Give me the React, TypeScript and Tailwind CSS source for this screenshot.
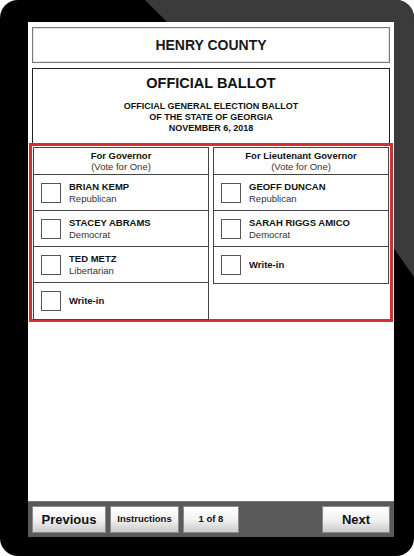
import React from 'react';

type Candidate = { name: string; party?: string };

const governor: Candidate[] = [
  { name: 'BRIAN KEMP', party: 'Republican' },
  { name: 'STACEY ABRAMS', party: 'Democrat' },
  { name: 'TED METZ', party: 'Libertarian' },
  { name: 'Write-in' },
];

const lieutenant: Candidate[] = [
  { name: 'GEOFF DUNCAN', party: 'Republican' },
  { name: 'SARAH RIGGS AMICO', party: 'Democrat' },
  { name: 'Write-in' },
];

const Contest: React.FC<{ title: string; items: Candidate[] }> = ({ title, items }) => (
  <div className="w-[176px] self-start border border-[#444]">
    <div className="h-[27px] flex flex-col items-center justify-center border-b border-[#444] leading-[11px] text-[9.5px] text-[#111]">
      <span className="font-bold">{title}</span>
      <span className="text-[#333]">(Vote for One)</span>
    </div>
    {items.map((c, i) => (
      <div
        key={c.name}
        className={`h-[36px] flex items-center pl-[7px] gap-[8px] ${i < items.length - 1 ? 'border-b border-[#444]' : ''}`}
      >
        <div className="w-[20px] h-[20px] border-[1.5px] border-[#555] bg-white shrink-0" />
        <div className="flex flex-col leading-[12px] text-[9.5px]">
          <span className="font-bold text-[#111]">{c.name}</span>
          {c.party && <span className="text-[#333]">{c.party}</span>}
        </div>
      </div>
    ))}
  </div>
);

const NavButton: React.FC<{ label: string; className: string }> = ({ label, className }) => (
  <button
    className={`h-[27px] flex items-center justify-center font-bold text-[#111] bg-linear-to-b from-white via-[#f2f2f2] to-[#cbcbcb] border border-[#8a8a8a] ${className}`}
  >
    {label}
  </button>
);

export default function App() {
  return (
    <div className="w-[414px] h-[556px] bg-white font-['Liberation_Sans',Arial,sans-serif]">
      <div className="relative w-[414px] h-[556px] bg-black rounded-[18px] overflow-hidden pl-[28px] pt-[22px]">
        {/* screen glare */}
        <svg className="absolute left-0 top-0" width="414" height="556" viewBox="0 0 414 556">
          <polygon points="145,0 414,0 414,277 240,30 175,30" fill="#3b3b3b" />
        </svg>

        <div className="relative z-10 w-[366px] h-[515px] bg-white flex flex-col">
          <div className="mx-[4px] mt-[5px] h-[36px] border border-[#7c7c7c] shadow-[inset_0_0_0_1px_#e4e4e4] flex items-center justify-center">
            <span className="text-[14px] font-bold text-[#1a1a1a]">HENRY COUNTY</span>
          </div>

          <div className="mx-[4px] mt-[5px] h-[75px] border border-b-0 border-[#222] flex flex-col items-center pt-[5px]">
            <span className="text-[14.5px] font-bold text-[#111] leading-[18px]">OFFICIAL BALLOT</span>
            <div className="mt-[9px] flex flex-col items-center text-[9px] font-bold text-[#111] leading-[11px]">
              <span>OFFICIAL GENERAL ELECTION BALLOT</span>
              <span>OF THE STATE OF GEORGIA</span>
              <span>NOVEMBER 6, 2018</span>
            </div>
          </div>

          <div className="mx-[1px] h-[179px] border-[3px] border-[#d3302f] flex gap-[4px] px-[1px] pt-[1px]">
            <Contest title="For Governor" items={governor} />
            <Contest title="For Lieutenant Governor" items={lieutenant} />
          </div>

          <div className="flex-1" />

          <div className="h-[36px] bg-[#5a5a5a] border-t border-[#777] flex items-center px-[4px] gap-[4px]">
            <NavButton label="Previous" className="w-[74px] text-[13px]" />
            <NavButton label="Instructions" className="w-[69px] text-[9.5px]" />
            <NavButton label="1 of 8" className="w-[56px] text-[9.5px]" />
            <NavButton label="Next" className="w-[68px] text-[13px] ml-auto" />
          </div>
        </div>
      </div>
    </div>
  );
}
